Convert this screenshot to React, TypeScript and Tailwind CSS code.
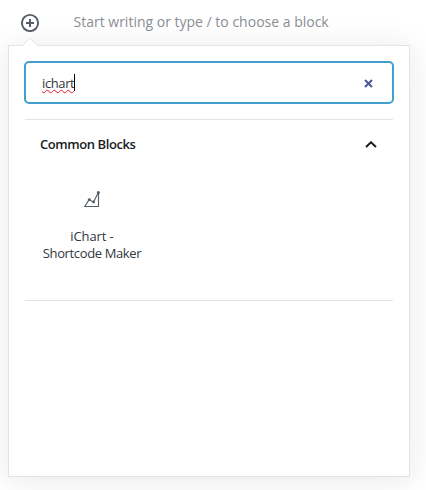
import React from "react";

function InserterIcon() {
  return (
    <svg className="block size-5" viewBox="0 0 20 20" fill="none" stroke="#555d66">
      <circle cx="10" cy="11" r="8.1" strokeWidth="1.9" />
      <path d="M10 7v8M6 11h8" strokeWidth="2" />
    </svg>
  );
}

function ChartIcon() {
  return (
    <svg className="block h-5 w-5" viewBox="0 0 20 20" fill="none" stroke="#555d66">
      <path d="M16.5 3.2V17.5H2.8L7 10.7L11.6 13L16.3 3.5" strokeWidth="1.15" />
      <g fill="#555d66" stroke="none">
        <circle cx="7.3" cy="10.6" r="1.4" />
        <circle cx="11.6" cy="13" r="1.4" />
        <circle cx="16.4" cy="3.5" r="1.5" />
      </g>
    </svg>
  );
}

export default function App() {
  return (
    <div className="h-[490px] w-[426px] overflow-hidden bg-white font-['Open_Sans','Noto_Sans',sans-serif] text-[13px] text-[#32373c]">
      <div className="flex h-[45px] items-start pt-[12px] pl-5">
        <InserterIcon />
        <p className="ml-[33.5px] text-[14px] leading-5 whitespace-nowrap text-[#8b8e95]">Start writing or type / to choose a block</p>
      </div>
      <div className="relative ml-2 h-[432px] w-[402px] border border-[#e2e4e7] bg-white px-[15px] pt-[15px] shadow-[0_3px_30px_rgba(25,30,35,0.1)]">
        <svg className="absolute -top-[9px] left-[13px] h-[10px] w-4" viewBox="0 0 16 10">
          <path d="M0 9.5L8 1.5L16 9.5V10H0Z" fill="white" />
          <path d="M0 9L8 1.3L16 9" fill="none" stroke="#e2e4e7" />
        </svg>
        <div className="flex h-[43px] w-[370px] items-center justify-between rounded-[5px] border-2 border-[#459fce] pr-[19px] pl-4">
          <div className="flex items-center pt-[3px] text-[13px]">
            <span className="tracking-[-0.38px] underline decoration-[#e81123] decoration-wavy decoration-1 underline-offset-1">ichart</span>
            <span className="-mt-[3px] h-[17px] w-px bg-black" />
          </div>
          <svg className="mt-[2px] block size-[9px]" viewBox="0 0 9 9" fill="none" stroke="#4a5798" strokeWidth="2">
            <path d="M1 1L8 8M8 1L1 8" />
          </svg>
        </div>
        <div className="mx-px mt-[15px] h-[182px] border-y border-[#e2e4e7]">
          <div className="flex h-[49px] items-center justify-between pr-4 pl-[15px]">
            <h2 className="text-[13px] font-semibold tracking-[-0.42px] text-[#191e23]">Common Blocks</h2>
            <svg className="block h-[7px] w-3" viewBox="0 0 12 7" fill="none" stroke="#191e23" strokeWidth="2">
              <path d="M1 6L6 1.3L11 6" />
            </svg>
          </div>
          <div className="flex w-[134px] flex-col items-center pt-5">
            <ChartIcon />
            <p className="mt-[19px] text-center text-[13px] leading-[17px] tracking-[-0.37px] whitespace-nowrap">
              <span className="tracking-[-0.1px]">iChart -</span><br />Shortcode Maker
            </p>
          </div>
        </div>
      </div>
    </div>
  );
}
